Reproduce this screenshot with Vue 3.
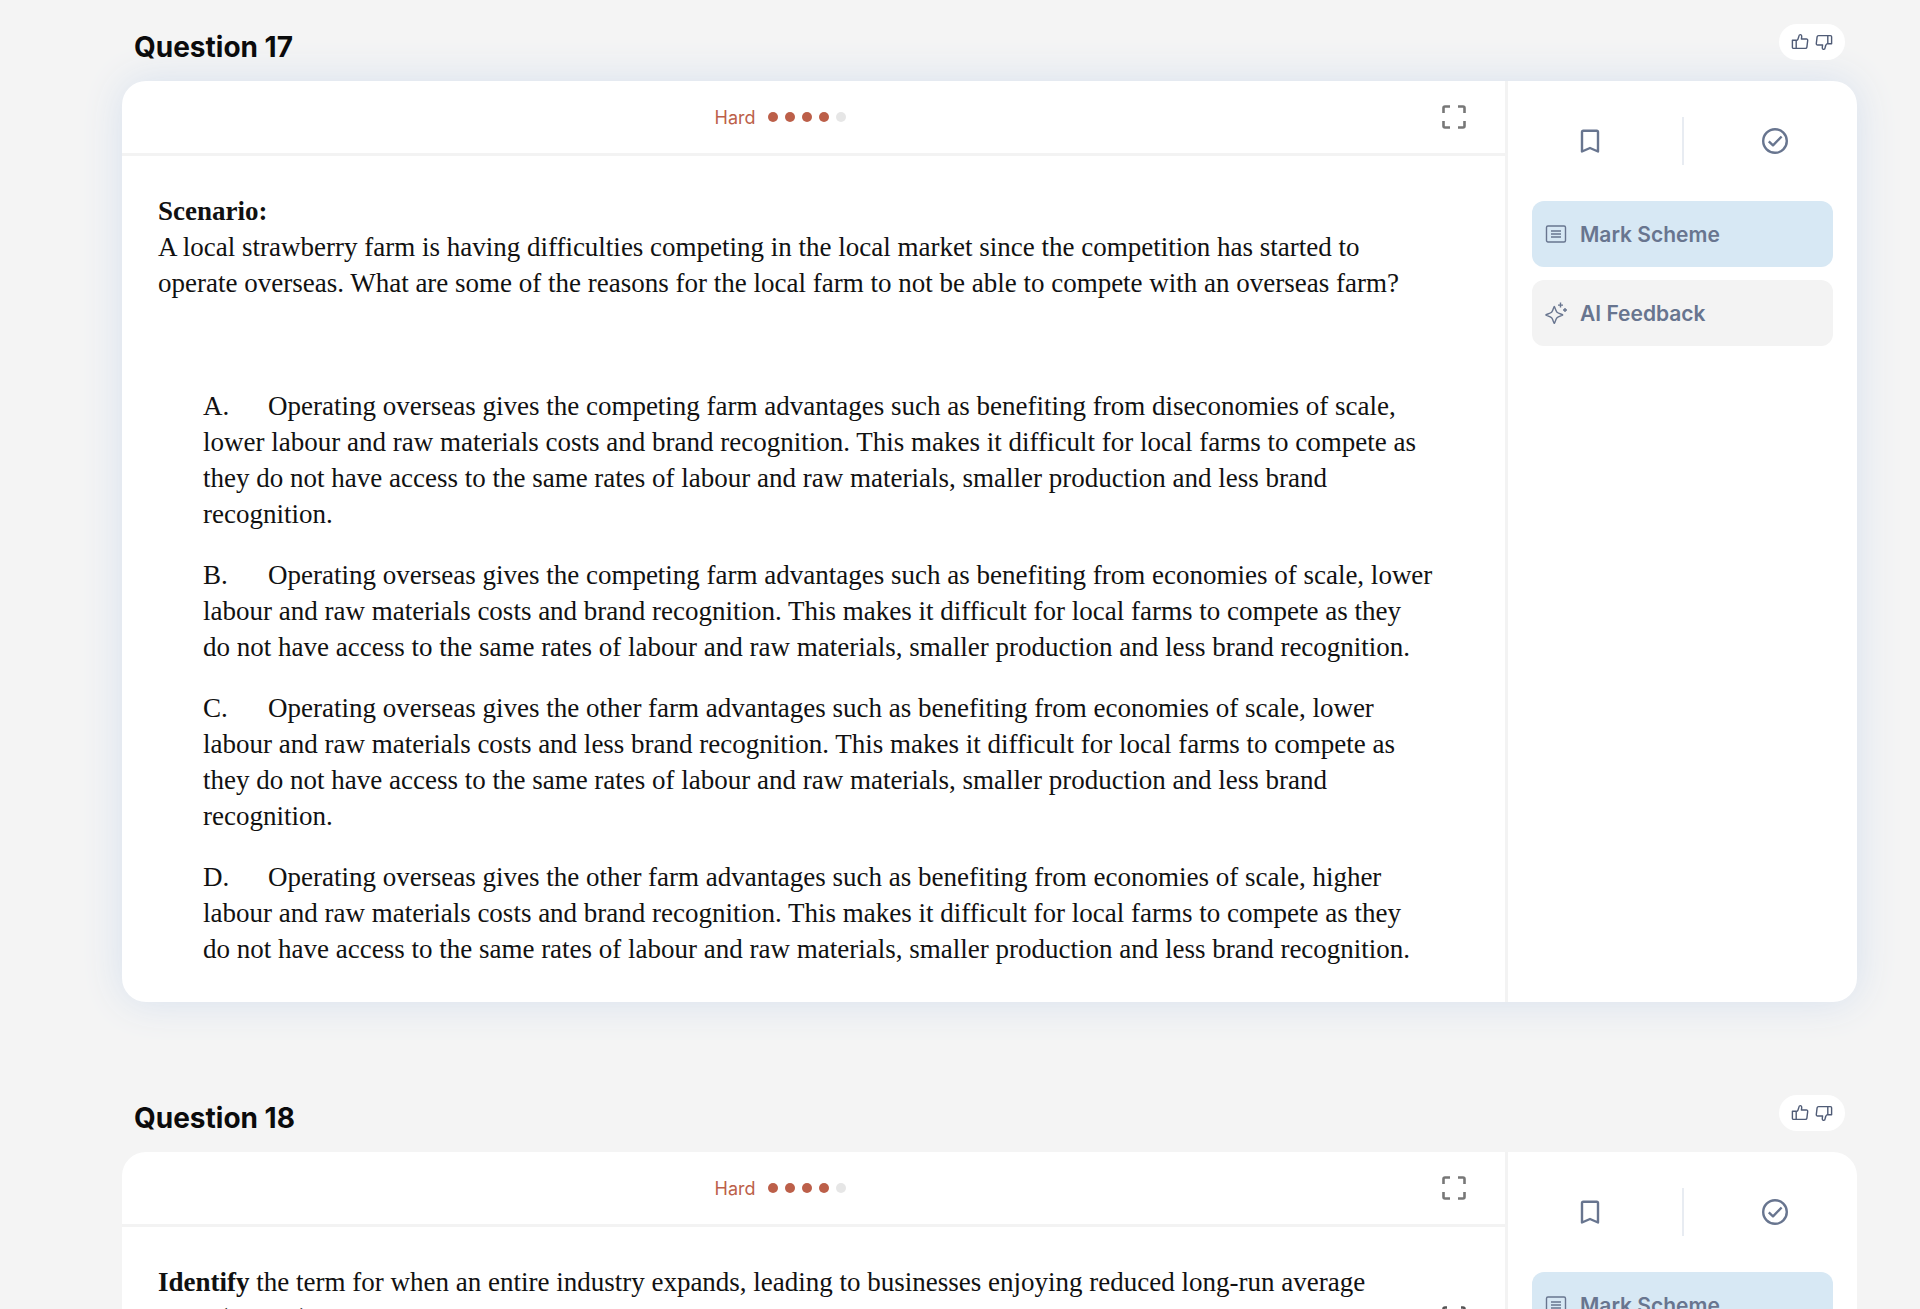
<template>
  <main class="page">
    <section v-for="question in questions" :key="question.number" class="question">
      <header class="question-top">
        <h2 class="question-title">Question {{ question.number }}</h2>
        <div class="votes">
          <button type="button" class="icon-button" aria-label="Helpful">
            <svg width="18" height="18" viewBox="0 0 18 18" class="icon thin">
              <path d="M1.4 7.2h3.8v8.2H2.6c-.7 0-1.2-.5-1.2-1.2zM5.2 8c1.5-1 2.3-2.400 2.600-4.400.1-1.100.5-2 1.400-2s1.600.8 1.500 2.200L10.400 6h5c.9 0 1.400.6 1.300 1.400l-.8 6.700c-.1.8-.7 1.300-1.500 1.300H5.200" />
            </svg>
          </button>
          <button type="button" class="icon-button" aria-label="Not helpful">
            <svg width="18" height="18" viewBox="0 0 18 18" class="icon thin">
              <path d="M16.6 10.8h-3.800V2.600h2.600c.7 0 1.200.5 1.200 1.200zM12.800 10c-1.500 1-2.300 2.400-2.600 4.400-.1 1.100-.5 2-1.400 2s-1.600-.8-1.500-2.200l.3-2.200h-5c-.9 0-1.400-.6-1.300-1.400l.8-6.700c.1-.8.7-1.300 1.500-1.300h9.200" />
            </svg>
          </button>
        </div>
      </header>

      <article class="card" :class="{ active: question.active }">
        <div class="card-main">
          <div class="card-header">
            <div class="difficulty">
              <span>Hard</span>
              <span class="dots">
                <i v-for="n in 5" :key="n" class="dot" :class="{ filled: n <= 4 }"></i>
              </span>
            </div>
            <button type="button" class="icon-button expand" aria-label="Full screen">
              <svg width="24" height="24" viewBox="0 0 24 24" class="icon expand-icon">
                <path d="M1.500 8V3q0-1.500 1.500-1.500h5M16 1.500h5q1.500 0 1.500 1.500v5M22.500 16v5q0 1.500-1.500 1.500h-5M8 22.500H3q-1.500 0-1.500-1.500v-5" />
              </svg>
            </button>
          </div>
          <div class="card-body">
            <div class="prompt-row">
              <p class="prompt"><strong>{{ question.lead }}</strong>{{ question.prompt }}</p>
              <button v-if="question.zoomable" type="button" class="icon-button zoom" aria-label="Enlarge">
                <svg width="24" height="24" viewBox="0 0 24 24" class="icon expand-icon">
                  <path d="M1.500 7V3q0-1.500 1.500-1.500h2M19 1.500h2q1.500 0 1.500 1.500v4M22.500 17v4q0 1.500-1.500 1.500h-2M5 22.500H3q-1.500 0-1.500-1.500v-4" />
                </svg>
              </button>
            </div>
            <ol v-if="question.options.length" class="options">
              <li v-for="option in question.options" :key="option.letter">{{ option.letter + '.\t' + option.text }}</li>
            </ol>
          </div>
        </div>

        <aside class="card-side">
          <div class="actions">
            <button type="button" class="icon-button" aria-label="Bookmark">
              <svg width="26" height="26" viewBox="0 0 26 26" class="icon thick">
                <path d="M5 23.500V4q0-1.300 1.300-1.300h13.400Q21 2.700 21 4v19.500l-8-3.500z" />
              </svg>
            </button>
            <span class="divider"></span>
            <button type="button" class="icon-button" aria-label="Mark as complete">
              <svg width="26" height="26" viewBox="0 0 26 26" class="icon thick">
                <circle cx="13" cy="13" r="11.800" />
                <path d="M6.800 13.300l4.200 4 8.600-8.800" />
              </svg>
            </button>
          </div>
          <div class="tools">
            <button type="button" class="tool primary">
              <svg width="22" height="22" viewBox="0 0 22 22" class="icon thin">
                <rect x="1.500" y="3" width="19" height="16" rx="1.500" />
                <path d="M6 8h10M6 11h10M6 14h10" />
              </svg>
              Mark Scheme
            </button>
            <button type="button" class="tool">
              <svg width="22" height="22" viewBox="0 0 22 22" class="icon thin">
                <path d="M9.300 4.500c.5 0 1.300 4.500 2.700 5.800s5.800 2.100 5.800 2.700-4.400 1.300-5.800 2.700-2.200 5.800-2.700 5.800-1.300-4.400-2.700-5.800S.8 13.600.8 13s4.400-1.400 5.800-2.700 2.200-5.800 2.700-5.800z" />
                <path d="M15.500.6v5M13 3.100h5M20 6v4M18 8h4" />
              </svg>
              AI Feedback
            </button>
          </div>
        </aside>
      </article>
    </section>
  </main>
</template>

<script setup>
const questions = [
  {
    number: 17,
    active: true,
    zoomable: false,
    lead: 'Scenario:',
    prompt:
      '\nA local strawberry farm is having difficulties competing in the local market since the competition has started to\noperate overseas. What are some of the reasons for the local farm to not be able to compete with an overseas farm?',
    options: [
      {
        letter: 'A',
        text: 'Operating overseas gives the competing farm advantages such as benefiting from diseconomies of scale,\nlower labour and raw materials costs and brand recognition. This makes it difficult for local farms to compete as\nthey do not have access to the same rates of labour and raw materials, smaller production and less brand\nrecognition.'
      },
      {
        letter: 'B',
        text: 'Operating overseas gives the competing farm advantages such as benefiting from economies of scale, lower\nlabour and raw materials costs and brand recognition. This makes it difficult for local farms to compete as they\ndo not have access to the same rates of labour and raw materials, smaller production and less brand recognition.'
      },
      {
        letter: 'C',
        text: 'Operating overseas gives the other farm advantages such as benefiting from economies of scale, lower\nlabour and raw materials costs and less brand recognition. This makes it difficult for local farms to compete as\nthey do not have access to the same rates of labour and raw materials, smaller production and less brand\nrecognition.'
      },
      {
        letter: 'D',
        text: 'Operating overseas gives the other farm advantages such as benefiting from economies of scale, higher\nlabour and raw materials costs and brand recognition. This makes it difficult for local farms to compete as they\ndo not have access to the same rates of labour and raw materials, smaller production and less brand recognition.'
      }
    ]
  },
  {
    number: 18,
    active: false,
    zoomable: true,
    lead: 'Identify',
    prompt:
      ' the term for when an entire industry expands, leading to businesses enjoying reduced long-run average\ncosts (LRAC)?',
    options: []
  }
]
</script>

<style>
body {
  background: #f4f4f4;
}
</style>

<style scoped>
.page {
  box-sizing: border-box;
  height: 100vh;
  overflow: hidden;
  padding: 24px 63px 0 122px;
  font-family: Inter, "Liberation Sans", sans-serif;
}

.question {
  margin-bottom: 93px;
}

.question-top {
  display: flex;
  justify-content: space-between;
  align-items: flex-start;
  height: 57px;
  padding: 0 12px;
}

.question-title {
  margin: 5px 0 0;
  font-size: 28px;
  line-height: 36px;
  font-weight: 700;
  color: #0b0b0c;
}

.votes {
  position: relative;
  z-index: 1;
  display: flex;
  align-items: center;
  gap: 6px;
  height: 36px;
  padding: 0 12px;
  border-radius: 18px;
  background: #fff;
}

.icon-button {
  display: flex;
  align-items: center;
  justify-content: center;
  padding: 0;
  border: 0;
  background: none;
  color: #68758f;
  cursor: pointer;
}

.icon {
  display: block;
  fill: none;
  stroke: currentColor;
  stroke-linejoin: round;
}

.thin {
  stroke-width: 1.4;
}

.thick {
  stroke-width: 2.4;
}

.votes .icon-button {
  color: #4f5b76;
}

.card {
  display: flex;
  border-radius: 24px;
  background: #fff;
}

.card.active {
  box-shadow: 0 0 40px #d6e0ee;
}

.card-main {
  flex: 1;
  min-width: 0;
}

.card-header {
  display: flex;
  align-items: center;
  height: 72px;
  padding-right: 36px;
  border-bottom: 3px solid #f3f3f3;
}

.difficulty {
  flex: 1;
  display: flex;
  align-items: center;
  justify-content: center;
  gap: 13px;
  font-size: 18px;
  color: #bc5f49;
}

.dots {
  display: flex;
  gap: 7px;
}

.dot {
  width: 10px;
  height: 10px;
  border-radius: 50%;
  background: #e6e6e6;
}

.dot.filled {
  background: #bc5f49;
}

.expand {
  width: 30px;
  color: #777;
}

.expand-icon {
  stroke-width: 2.6;
}

.card-body {
  padding: 37px 36px 35px;
  font-family: "Liberation Serif", serif;
  font-size: 27px;
  line-height: 36px;
  color: #111;
  white-space: pre;
}

.prompt-row {
  display: flex;
  justify-content: space-between;
  align-items: flex-start;
}

.prompt {
  margin: 0;
}

.zoom {
  width: 30px;
  margin-top: 42px;
  color: #555;
}

.options {
  display: flex;
  flex-direction: column;
  gap: 25px;
  margin: 87px 0 0;
  padding: 0 0 0 45px;
  list-style: none;
  tab-size: 65px;
}

.card-side {
  flex: 0 0 301px;
  padding: 36px 24px 24px;
  border-left: 3px solid #f3f3f3;
}

.actions {
  display: flex;
  align-items: center;
  justify-content: space-between;
  padding: 0 45px;
}

.divider {
  width: 2px;
  height: 48px;
  background: #e8ecf2;
}

.tools {
  display: flex;
  flex-direction: column;
  gap: 13px;
  margin-top: 36px;
}

.tool {
  display: flex;
  align-items: center;
  gap: 13px;
  height: 66px;
  padding: 0 13px;
  border: 0;
  border-radius: 12px;
  background: #f3f3f3;
  color: #68758f;
  font-family: inherit;
  font-size: 21px;
  font-weight: 600;
  cursor: pointer;
}

.tool.primary {
  background: #d7e8f4;
}
</style>
